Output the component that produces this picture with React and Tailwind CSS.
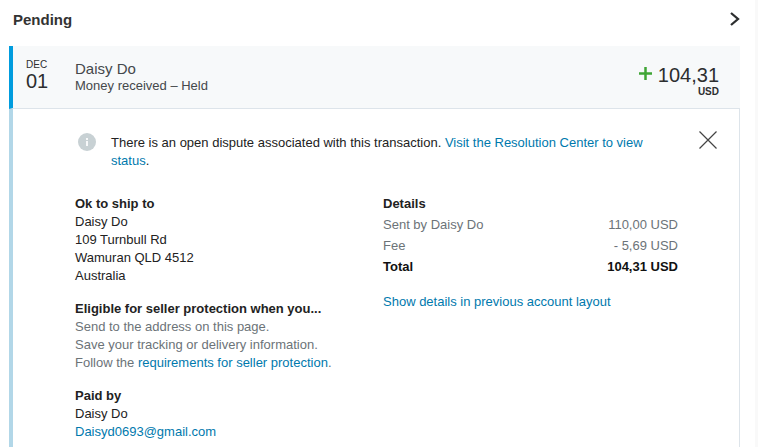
const linkClass = 'text-[#0079ad] hover:underline';

function InfoIcon() {
  return (
    <svg className="mt-[2px] size-[18px] shrink-0" viewBox="0 0 18 18" aria-hidden="true">
      <circle cx="9" cy="9" r="9" fill="#c8d1d4" />
      <path d="M8 5h2v2H8zM8 8h2v5H8z" fill="#fff" fillOpacity="0.85" />
    </svg>
  );
}

function SectionHeader() {
  return (
    <header className="flex items-center justify-between pt-2 pr-[15px] pl-[13px]">
      <h1 className="text-[15px] leading-6 font-bold text-[#333]">Pending</h1>
      <button type="button" aria-label="View all pending" className="cursor-pointer">
        <svg className="h-4 w-3" viewBox="0 0 12 16" fill="none" stroke="#2c2e2f" strokeWidth="2.300">
          <path d="M3 1l7 6-7 6" />
        </svg>
      </button>
    </header>
  );
}

function TransactionRow() {
  return (
    <div className="flex items-start border-b border-l-4 border-b-[#dde4ea] border-l-[#009cde] bg-[#f7f9fa] pt-3 pr-[21px] pb-3 pl-[13px] text-[#2c2e2f]">
      <time dateTime="12-01" className="w-[49px] shrink-0">
        <span className="block text-[10px] leading-[13px]">DEC</span>
        <span className="block text-xl leading-5">01</span>
      </time>
      <div className="flex-1 pt-[3px] text-[#44484b]">
        <h2 className="text-[15px] leading-4">Daisy Do</h2>
        <p className="text-[13px] leading-[18px]">Money received – Held</p>
      </div>
      <div className="pt-[5px] text-right">
        <p className="flex items-center justify-end gap-[6px] text-xl leading-6">
          <svg className="mb-1 size-[13px]" viewBox="0 0 13 13" fill="none" stroke="#3fa535" strokeWidth="2.500" role="img" aria-label="plus">
            <path d="M6.500 0v13M0 6.500h13" />
          </svg>
          104,31
        </p>
        <p className="text-[10px] leading-[9px] font-bold">USD</p>
      </div>
    </div>
  );
}

function DisputeNotice() {
  return (
    <div className="flex items-start pr-[22px] pl-[65px]">
      <InfoIcon />
      <p className="ml-[15px] flex-1 pt-[3px] pr-10">
        There is an open dispute associated with this transaction.{' '}
        <a href="#resolution" className={linkClass}>Visit the Resolution Center to view status</a>.
      </p>
      <button type="button" aria-label="Close" className="cursor-pointer">
        <svg className="block size-[18px]" viewBox="0 0 18 18" fill="none" stroke="#444" strokeWidth="1.200">
          <path d="M.5.5l17 17M17.500.5l-17 17" />
        </svg>
      </button>
    </div>
  );
}

function ShippingInfo() {
  return (
    <div className="flex flex-col gap-[15px]">
      <section>
        <h3 className="font-bold">Ok to ship to</h3>
        <address className="not-italic">
          Daisy Do<br />
          109 Turnbull Rd<br />
          Wamuran QLD 4512<br />
          Australia
        </address>
      </section>
      <section>
        <h3 className="font-bold">Eligible for seller protection when you...</h3>
        <div className="text-[#6c7378]">
          <p>Send to the address on this page.</p>
          <p>Save your tracking or delivery information.</p>
          <p>
            Follow the <a href="#requirements" className={linkClass}>requirements for seller protection</a>.
          </p>
        </div>
      </section>
      <section>
        <h3 className="font-bold">Paid by</h3>
        <p>Daisy Do</p>
        <a href="mailto:Daisyd0693@gmail.com" className={linkClass}>Daisyd0693@gmail.com</a>
      </section>
    </div>
  );
}

function PaymentDetails() {
  return (
    <section>
      <table className="w-full leading-[21px]">
        <caption className="pb-px text-left leading-[18px] font-bold">Details</caption>
        <tbody className="text-[#6c7378]">
          <tr>
            <th scope="row" className="text-left font-normal">Sent by Daisy Do</th>
            <td className="text-right">110,00 USD</td>
          </tr>
          <tr>
            <th scope="row" className="text-left font-normal">Fee</th>
            <td className="text-right">- 5,69 USD</td>
          </tr>
          <tr className="font-bold text-[#111]">
            <th scope="row" className="text-left">Total</th>
            <td className="text-right">104,31 USD</td>
          </tr>
        </tbody>
      </table>
      <a href="#classic" className={`mt-4 block ${linkClass}`}>Show details in previous account layout</a>
    </section>
  );
}

export default function App() {
  return (
    <div className="min-h-screen border-r-[3px] border-[#f9f9f9] bg-white font-['Liberation_Sans',Arial,sans-serif]">
      <SectionHeader />
      <main className="mt-[14px] mr-[15px] ml-[9px]">
        <TransactionRow />
        <div className="border-r border-l-4 border-r-[#dde4ea] border-l-[#b2d7e8] pt-[22px] pb-[6px] text-[13px] leading-[18px] text-[#222]">
          <DisputeNotice />
          <div className="grid grid-cols-2 gap-[13px] pt-[25px] pr-[61px] pl-[62px]">
            <ShippingInfo />
            <PaymentDetails />
          </div>
        </div>
      </main>
    </div>
  );
}
